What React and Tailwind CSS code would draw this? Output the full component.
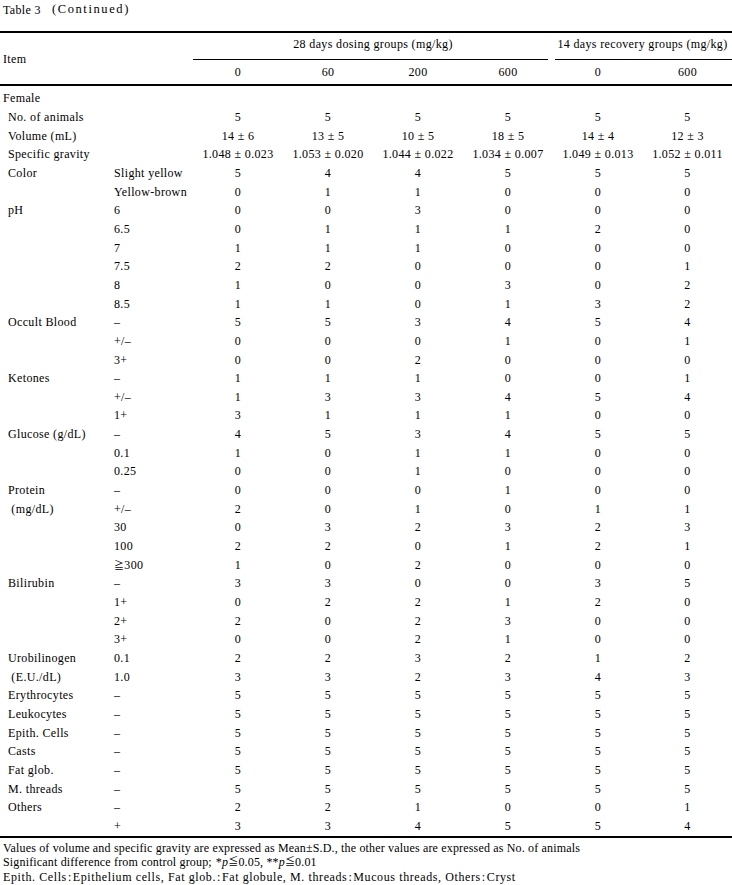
import React from "react";

const font = { fontFamily: '"Liberation Serif", "Noto Sans CJK JP", serif' };

const Ge = () => <span className="text-[10px]">≧</span>;
const Le = () => <span className="text-[10px]">≦</span>;
const Colon = () => <span className="mx-[1px]">:</span>;

const rows = [
  ["No. of animals", "", ["5", "5", "5", "5", "5", "5"]],
  ["Volume (mL)", "", ["14 ± 6", "13 ± 5", "10 ± 5", "18 ± 5", "14 ± 4", "12 ± 3"]],
  ["Specific gravity", "", ["1.048 ± 0.023", "1.053 ± 0.020", "1.044 ± 0.022", "1.034 ± 0.007", "1.049 ± 0.013", "1.052 ± 0.011"]],
  ["Color", "Slight yellow", ["5", "4", "4", "5", "5", "5"]],
  ["", "Yellow-brown", ["0", "1", "1", "0", "0", "0"]],
  ["pH", "6", ["0", "0", "3", "0", "0", "0"]],
  ["", "6.5", ["0", "1", "1", "1", "2", "0"]],
  ["", "7", ["1", "1", "1", "0", "0", "0"]],
  ["", "7.5", ["2", "2", "0", "0", "0", "1"]],
  ["", "8", ["1", "0", "0", "3", "0", "2"]],
  ["", "8.5", ["1", "1", "0", "1", "3", "2"]],
  ["Occult Blood", "–", ["5", "5", "3", "4", "5", "4"]],
  ["", "+/–", ["0", "0", "0", "1", "0", "1"]],
  ["", "3+", ["0", "0", "2", "0", "0", "0"]],
  ["Ketones", "–", ["1", "1", "1", "0", "0", "1"]],
  ["", "+/–", ["1", "3", "3", "4", "5", "4"]],
  ["", "1+", ["3", "1", "1", "1", "0", "0"]],
  ["Glucose (g/dL)", "–", ["4", "5", "3", "4", "5", "5"]],
  ["", "0.1", ["1", "0", "1", "1", "0", "0"]],
  ["", "0.25", ["0", "0", "1", "0", "0", "0"]],
  ["Protein", "–", ["0", "0", "0", "1", "0", "0"]],
  [" (mg/dL)", "+/–", ["2", "0", "1", "0", "1", "1"]],
  ["", "30", ["0", "3", "2", "3", "2", "3"]],
  ["", "100", ["2", "2", "0", "1", "2", "1"]],
  ["", <><Ge />300</>, ["1", "0", "2", "0", "0", "0"]],
  ["Bilirubin", "–", ["3", "3", "0", "0", "3", "5"]],
  ["", "1+", ["0", "2", "2", "1", "2", "0"]],
  ["", "2+", ["2", "0", "2", "3", "0", "0"]],
  ["", "3+", ["0", "0", "2", "1", "0", "0"]],
  ["Urobilinogen", "0.1", ["2", "2", "3", "2", "1", "2"]],
  [" (E.U./dL)", "1.0", ["3", "3", "2", "3", "4", "3"]],
  ["Erythrocytes", "–", ["5", "5", "5", "5", "5", "5"]],
  ["Leukocytes", "–", ["5", "5", "5", "5", "5", "5"]],
  ["Epith. Cells", "–", ["5", "5", "5", "5", "5", "5"]],
  ["Casts", "–", ["5", "5", "5", "5", "5", "5"]],
  ["Fat glob.", "–", ["5", "5", "5", "5", "5", "5"]],
  ["M. threads", "–", ["5", "5", "5", "5", "5", "5"]],
  ["Others", "–", ["2", "2", "1", "0", "0", "1"]],
  ["", "+", ["3", "3", "4", "5", "5", "4"]],
];

const grid = "grid grid-cols-[112px_81px_90px_90px_90px_90px_90px_89px] items-center h-[18.66px]";

function Row({ label, sub, vals }) {
  return (
    <div className={grid}>
      <div className="pl-[8px] whitespace-pre">{label}</div>
      <div className="pl-[2px] whitespace-nowrap">{sub}</div>
      {vals.map((v, i) => (
        <div key={i} className="text-center whitespace-nowrap">
          {v}
        </div>
      ))}
    </div>
  );
}

export default function App() {
  return (
    <div
      className="w-[732px] h-[885px] bg-white text-black text-[12px] tracking-[0.35px] leading-none overflow-hidden"
      style={font}
    >
      <div className="h-[19px] pl-[3px] flex items-center">
        <span>Table 3</span>
        <span className="ml-[11px] text-[12.5px] tracking-[1.6px]">(Continued)</span>
      </div>
      <div className="h-[12px]" />
      {/* header */}
      <div className="border-t-2 border-b-2 border-black grid grid-cols-[193px_360px_179px]">
        <div className="row-span-2 flex items-center pl-[3px]">Item</div>
        <div className="h-[27px] flex flex-col">
          <div className="h-[22px] flex items-center justify-center">28 days dosing groups (mg/kg)</div>
          <div className="mt-auto mr-[5px] border-b border-black" />
        </div>
        <div className="h-[27px] flex flex-col">
          <div className="h-[22px] flex items-center justify-center">14 days recovery groups (mg/kg)</div>
          <div className="mt-auto ml-[2px] border-b border-black" />
        </div>
        <div className="h-[24px] grid grid-cols-4 items-center">
          <div className="text-center">0</div>
          <div className="text-center">60</div>
          <div className="text-center">200</div>
          <div className="text-center">600</div>
        </div>
        <div className="h-[24px] grid grid-cols-[90px_89px] items-center">
          <div className="text-center">0</div>
          <div className="text-center">600</div>
        </div>
      </div>
      {/* body */}
      <div className="pt-[3px] pb-[1px] border-b-2 border-black">
        <div className="h-[18.66px] flex items-center pl-[3px]">Female</div>
        {rows.map((r, i) => (
          <Row key={i} label={r[0]} sub={r[1]} vals={r[2]} />
        ))}
      </div>
      <div className="pt-[2px] pl-[3px] tracking-[0.17px]">
        <div className="h-[14.5px] flex items-center whitespace-nowrap">
          Values of volume and specific gravity are expressed as Mean±S.D., the other values are expressed as No. of animals
        </div>
        <div className="h-[14.5px] flex items-center whitespace-nowrap">
          Significant difference from control group;<span className="ml-[4px]">*</span><i>p</i><Le />0.05, **<i>p</i><Le />0.01
        </div>
        <div className="h-[14.5px] flex items-center whitespace-nowrap tracking-[0.6px]">
          Epith. Cells<Colon />Epithelium cells, Fat glob.<Colon />Fat globule, M. threads<Colon />Mucous threads, Others<Colon />Cryst
        </div>
      </div>
    </div>
  );
}
